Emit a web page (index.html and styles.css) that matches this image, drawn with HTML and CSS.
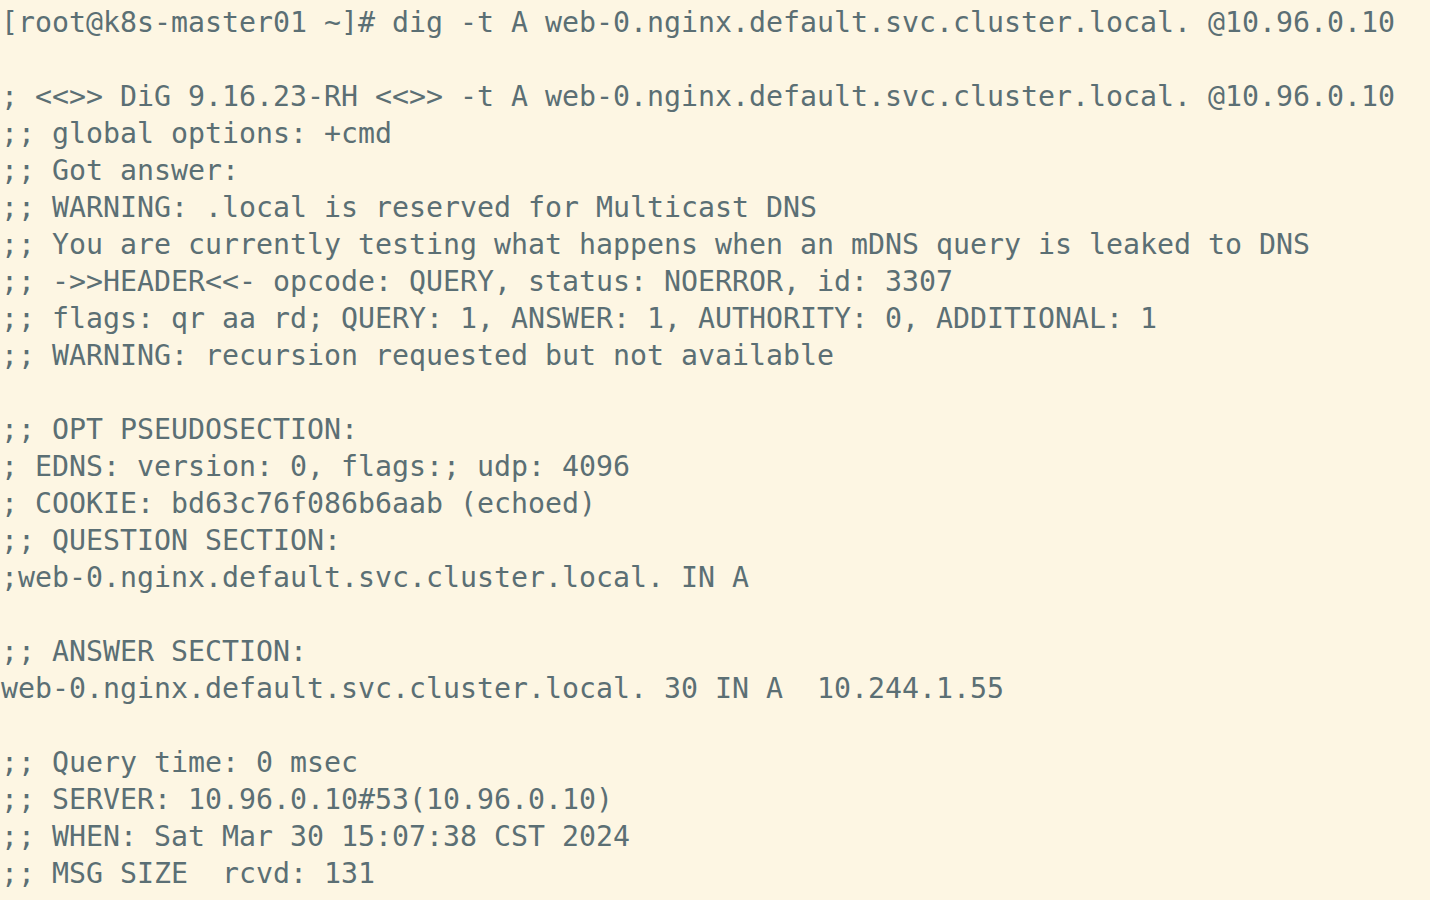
FILE: index.html
```html
<!DOCTYPE html>
<html lang="en">
<head>
<meta charset="utf-8">
<title>dig</title>
<link rel="stylesheet" href="styles.css">
</head>
<body>
<pre class="term">[root@k8s-master01 ~]# dig -t A web-0.nginx.default.svc.cluster.local. @10.96.0.10

; &lt;&lt;&gt;&gt; DiG 9.16.23-RH &lt;&lt;&gt;&gt; -t A web-0.nginx.default.svc.cluster.local. @10.96.0.10
;; global options: +cmd
;; Got answer:
;; WARNING: .local is reserved for Multicast DNS
;; You are currently testing what happens when an mDNS query is leaked to DNS
;; -&gt;&gt;HEADER&lt;&lt;- opcode: QUERY, status: NOERROR, id: 3307
;; flags: qr aa rd; QUERY: 1, ANSWER: 1, AUTHORITY: 0, ADDITIONAL: 1
;; WARNING: recursion requested but not available

;; OPT PSEUDOSECTION:
; EDNS: version: 0, flags:; udp: 4096
; COOKIE: bd63c76f086b6aab (echoed)
;; QUESTION SECTION:
;web-0.nginx.default.svc.cluster.local. IN A

;; ANSWER SECTION:
web-0.nginx.default.svc.cluster.local. 30 IN A  10.244.1.55

;; Query time: 0 msec
;; SERVER: 10.96.0.10#53(10.96.0.10)
;; WHEN: Sat Mar 30 15:07:38 CST 2024
;; MSG SIZE  rcvd: 131</pre>
</body>
</html>
```
FILE: styles.css
```css
html, body {
  margin: 0;
  padding: 0;
  background: #fdf6e3;
  height: 100%;
  overflow: hidden;
}
.term {
  margin: 0;
  padding: 4px 0 0 1px;
  font-family: "DejaVu Sans Mono", "Liberation Mono", monospace;
  font-size: 28.24px;
  line-height: 37px;
  color: #5b6f74;
  white-space: pre;
}
```
